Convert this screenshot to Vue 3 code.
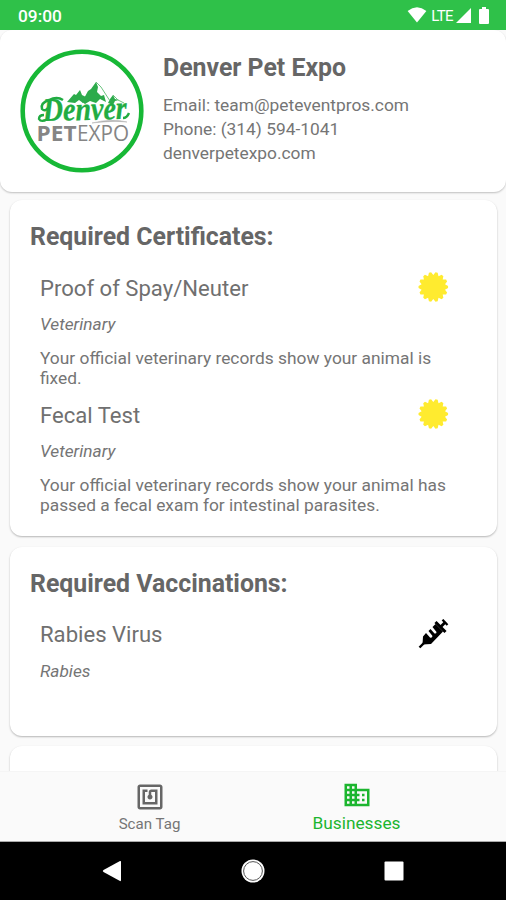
<script setup>
const cards = [
  {
    title: 'Required Certificates:',
    kind: 'certificates',
    items: [
      { name: 'Proof of Spay/Neuter', sub: 'Veterinary', lines: ['Your official veterinary records show your animal is', 'fixed.'] },
      { name: 'Fecal Test', sub: 'Veterinary', lines: ['Your official veterinary records show your animal has', 'passed a fecal exam for intestinal parasites.'] },
    ],
  },
  {
    title: 'Required Vaccinations:',
    kind: 'vaccinations',
    items: [{ name: 'Rabies Virus', sub: 'Rabies', lines: [] }],
  },
]

const points = 14
const badge = Array.from({ length: points }, (_, i) => {
  const mid = ((i + 0.5) / points) * Math.PI * 2 - Math.PI / 2
  return [[12, -0.2244], [14.8, -0.075], [14.8, 0.075]]
    .map(([r, d]) => `${(15.3 + r * Math.cos(mid + d)).toFixed(2)},${(15 + r * Math.sin(mid + d)).toFixed(2)}`)
    .join(' ')
}).join(' ')
</script>

<template>
  <div class="screen">
    <header class="status">
      <span class="time">09:00</span>
      <svg class="wifi" width="20" height="16" viewBox="0 0 20 16"><path d="M0.6 4Q10-3.4 19.4 4L10 15.6Z" /></svg>
      <span class="lte">LTE</span>
      <svg class="signal" width="15" height="15" viewBox="0 0 15 15"><path d="M0 15L15 0V15Z" /></svg>
      <svg class="battery" width="10" height="17" viewBox="0 0 10 17"><path d="M3 0H7V2H9Q10 2 10 3V16Q10 17 9 17H1Q0 17 0 16V3Q0 2 1 2H3Z" /></svg>
    </header>

    <main class="content">
      <section class="profile">
        <svg class="logo" width="124" height="124" viewBox="0 0 124 124">
          <circle cx="62" cy="62" r="59.3" fill="#fff" stroke="#17b836" stroke-width="4.6" />
          <path d="M47 53L54 45L56 46L60 41L62 46L66 48L63 54L59 51L55 54Z" fill="#2cab4b" />
          <path d="M62 53L68 42L71 40L76 33L78 38L77 43L81 47L84 46L86 53L80 50L76 54L70 52L65 55Z" fill="#2cab4b" />
          <path d="M88 54L90 50L93 46L95 50L99 51L95 52L93 56Z" fill="#2cab4b" />
          <path d="M76 33L81 38L90 52M93 46L98 51L104 54" fill="none" stroke="#5cbd73" stroke-width="0.9" />
          <g class="script">
            <text x="23" y="71" textLength="84" lengthAdjust="spacingAndGlyphs" transform="rotate(-1.5 62 71)">Denver</text>
            <path d="M29 51Q20 54 22 60Q25 63 28 59M29 51Q37 47 43 51M27 70.5Q21 73.5 19 70Q19 66 24 66M103 69Q107 69 109 64" />
          </g>
          <path d="M72 74Q92 69 107 73Q92 71.5 72 74Z" fill="#aaa" stroke="#bbb" stroke-width="0.6" />
          <text class="pet" x="16.5" y="91.5" textLength="40" lengthAdjust="spacingAndGlyphs">PET</text>
          <text class="expo" x="57" y="91.5" textLength="52" lengthAdjust="spacingAndGlyphs">EXPO</text>
        </svg>
        <div class="info">
          <h1>Denver Pet Expo</h1>
          <p class="email">Email: team@peteventpros.com</p>
          <p class="phone">Phone: (314) 594-1041</p>
          <p class="site">denverpetexpo.com</p>
        </div>
      </section>

      <section v-for="card in cards" :key="card.kind" class="card" :class="card.kind">
        <h2>{{ card.title }}</h2>
        <article v-for="item in card.items" :key="item.name">
          <div class="row">
            <h3>{{ item.name }}</h3>
            <svg v-if="card.kind === 'certificates'" width="31" height="31" viewBox="0 0 31 31"><polygon :points="badge" fill="#ffeb2f" /></svg>
            <svg v-else width="31" height="31" viewBox="0 0.5 31 31">
              <path d="M1.5 29L6 24.5" stroke="#000" stroke-width="2.4" />
              <path d="M4.5 26L5 18L8 14.5L12 19Q14 20 14.5 17.5L10.5 12.5L12.5 10.5L16.5 15Q18.5 15.5 18.5 13.5L14.5 8.5L17.5 5.5L25 13L13 25.5Z" />
              <path d="M17.5 3.5L27.5 13.5" stroke="#000" stroke-width="3" />
              <path d="M22 9L27.5 3.5" stroke="#000" stroke-width="2.8" />
              <path d="M24.5 1.2L29.5 6.5" stroke="#000" stroke-width="2.2" />
            </svg>
          </div>
          <p class="sub">{{ item.sub }}</p>
          <p v-if="item.lines.length" class="desc"><span v-for="line in item.lines" :key="line">{{ line }}</span></p>
        </article>
      </section>
      <section class="card next"></section>
    </main>

    <nav class="tabs">
      <div class="tab scan">
        <svg width="30" height="30" viewBox="0 0 24 24"><path d="M20 2H4c-1.1 0-2 .9-2 2v16c0 1.1.9 2 2 2h16c1.1 0 2-.9 2-2V4c0-1.1-.9-2-2-2zm0 18H4V4h16v16zM18 6h-5c-1.1 0-2 .9-2 2v2.28c-.6.35-1 .98-1 1.72 0 1.1.9 2 2 2s2-.9 2-2c0-.74-.4-1.38-1-1.72V8h3v8H8V8h2V6H6v12h12V6z" /></svg>
        <span>Scan Tag</span>
      </div>
      <div class="tab business">
        <svg width="30" height="30" viewBox="0 0 24 24"><path d="M12 7V3H2v18h20V7H12zM6 19H4v-2h2v2zm0-4H4v-2h2v2zm0-4H4V9h2v2zm0-4H4V5h2v2zm4 12H8v-2h2v2zm0-4H8v-2h2v2zm0-4H8V9h2v2zm0-4H8V5h2v2zm10 12h-8v-2h2v-2h-2v-2h2v-2h-2V9h8v10zm-2-8h-2v2h2v-2zm0 4h-2v2h2v-2z" /></svg>
        <span>Businesses</span>
      </div>
    </nav>

    <footer class="system">
      <svg width="20" height="22" viewBox="0 0 20 22"><path d="M18 1Q19 .5 19 2V20Q19 21.5 18 21L1.5 12Q0 11 1.5 10Z" /></svg>
      <svg width="24" height="24" viewBox="0 0 24 24"><circle cx="12" cy="12" r="11.5" /><circle cx="12" cy="12" r="9.4" fill="none" stroke="#555" stroke-width="1" /></svg>
      <svg width="20" height="20" viewBox="0 0 20 20"><rect x=".5" y=".5" width="19" height="19" rx="1" /></svg>
    </footer>
  </div>
</template>

<style>
body { margin: 0; }
</style>

<style scoped>
.screen {
  width: 506px;
  height: 900px;
  display: flex;
  flex-direction: column;
  overflow: hidden;
  background: #fafafa;
  color: #757575;
  font-family: Roboto, "Liberation Sans", sans-serif;
}
h1, h2, h3, p { margin: 0; font-weight: 400; white-space: nowrap; }
svg { display: block; flex: none; }
.status {
  height: 30px;
  flex: none;
  display: flex;
  box-sizing: border-box;
  padding: 0 17px 0 18px;
  align-items: center;
  background: #2fc149;
  color: #fff;
  fill: #fff;
}
.time { flex: 1; font-size: 17.3px; font-weight: 500; line-height: 30px; padding-top: 1px; }
.lte { font-size: 15px; line-height: 30px; margin: 1px 3px 0 4px; letter-spacing: -0.6px; }
.battery { margin-left: 8px; }
.content { height: 741px; flex: none; overflow: hidden; }
.profile {
  height: 162px;
  box-sizing: border-box;
  display: flex;
  gap: 19px;
  padding: 19px 20px;
  background: #fff;
  border-radius: 12px;
  box-shadow: 0 1px 2px rgba(0, 0, 0, .24);
}
.script { font: italic 700 33px "Liberation Serif", serif; fill: #21ac42; }
.script text { stroke: #21ac42; stroke-width: .3; }
.script path { fill: none; stroke: #21ac42; stroke-width: 2.4; }
.pet { font: 700 22px "Open Sans", sans-serif; fill: #858585; }
.expo { font: 400 22px "Open Sans", sans-serif; fill: #858585; }
.info { padding-top: 4px; }
h1, h2 { font-size: 24.85px; font-weight: 700; color: #666; line-height: 30px; }
.info p { font-size: 17.35px; line-height: 24px; }
.info h1 { margin-bottom: 10px; }
.card {
  margin: 8px 9px 0 10px;
  box-sizing: border-box;
  background: #fff;
  border-radius: 12px;
  box-shadow: 0 1px 2px rgba(0, 0, 0, .28);
  padding: 22px 48px 0 20px;
}
.certificates { height: 336px; }
.vaccinations { height: 189px; margin-top: 11px; }
.next { height: 120px; margin-top: 10px; }
article { padding-left: 10px; height: 127px; }
h2 + article { margin-top: 20px; }
.row { display: flex; justify-content: space-between; height: 32px; }
h3 { font-size: 22.1px; line-height: 33px; color: #707070; }
.vaccinations h3 { line-height: 31px; }
.sub { font-size: 17.3px; line-height: 20px; font-style: italic; margin-top: 10px; }
.desc { font-size: 17.35px; line-height: 20px; margin-top: 14px; }
.desc span { display: block; }
.tabs {
  height: 71px;
  flex: none;
  display: flex;
  justify-content: center;
  box-sizing: border-box;
  background: #fafafa;
  border-top: 1px solid #f5f5f5;
  border-bottom: 1px solid #aaa;
}
.tab { width: 207px; display: flex; flex-direction: column; align-items: center; }
.tab svg { margin-top: 10px; fill: currentColor; }
.tab span { line-height: 20px; }
.scan { color: #666; }
.scan span { font-size: 15.1px; margin-top: 2px; color: #757575; }
.business { color: #1cb52f; }
.business svg { margin-top: 8px; }
.business span { font-size: 17.3px; margin-top: 3px; }
.system {
  flex: 1;
  display: flex;
  align-items: center;
  justify-content: space-between;
  background: #000;
  fill: #fff;
  padding: 0 102px;
}
</style>
